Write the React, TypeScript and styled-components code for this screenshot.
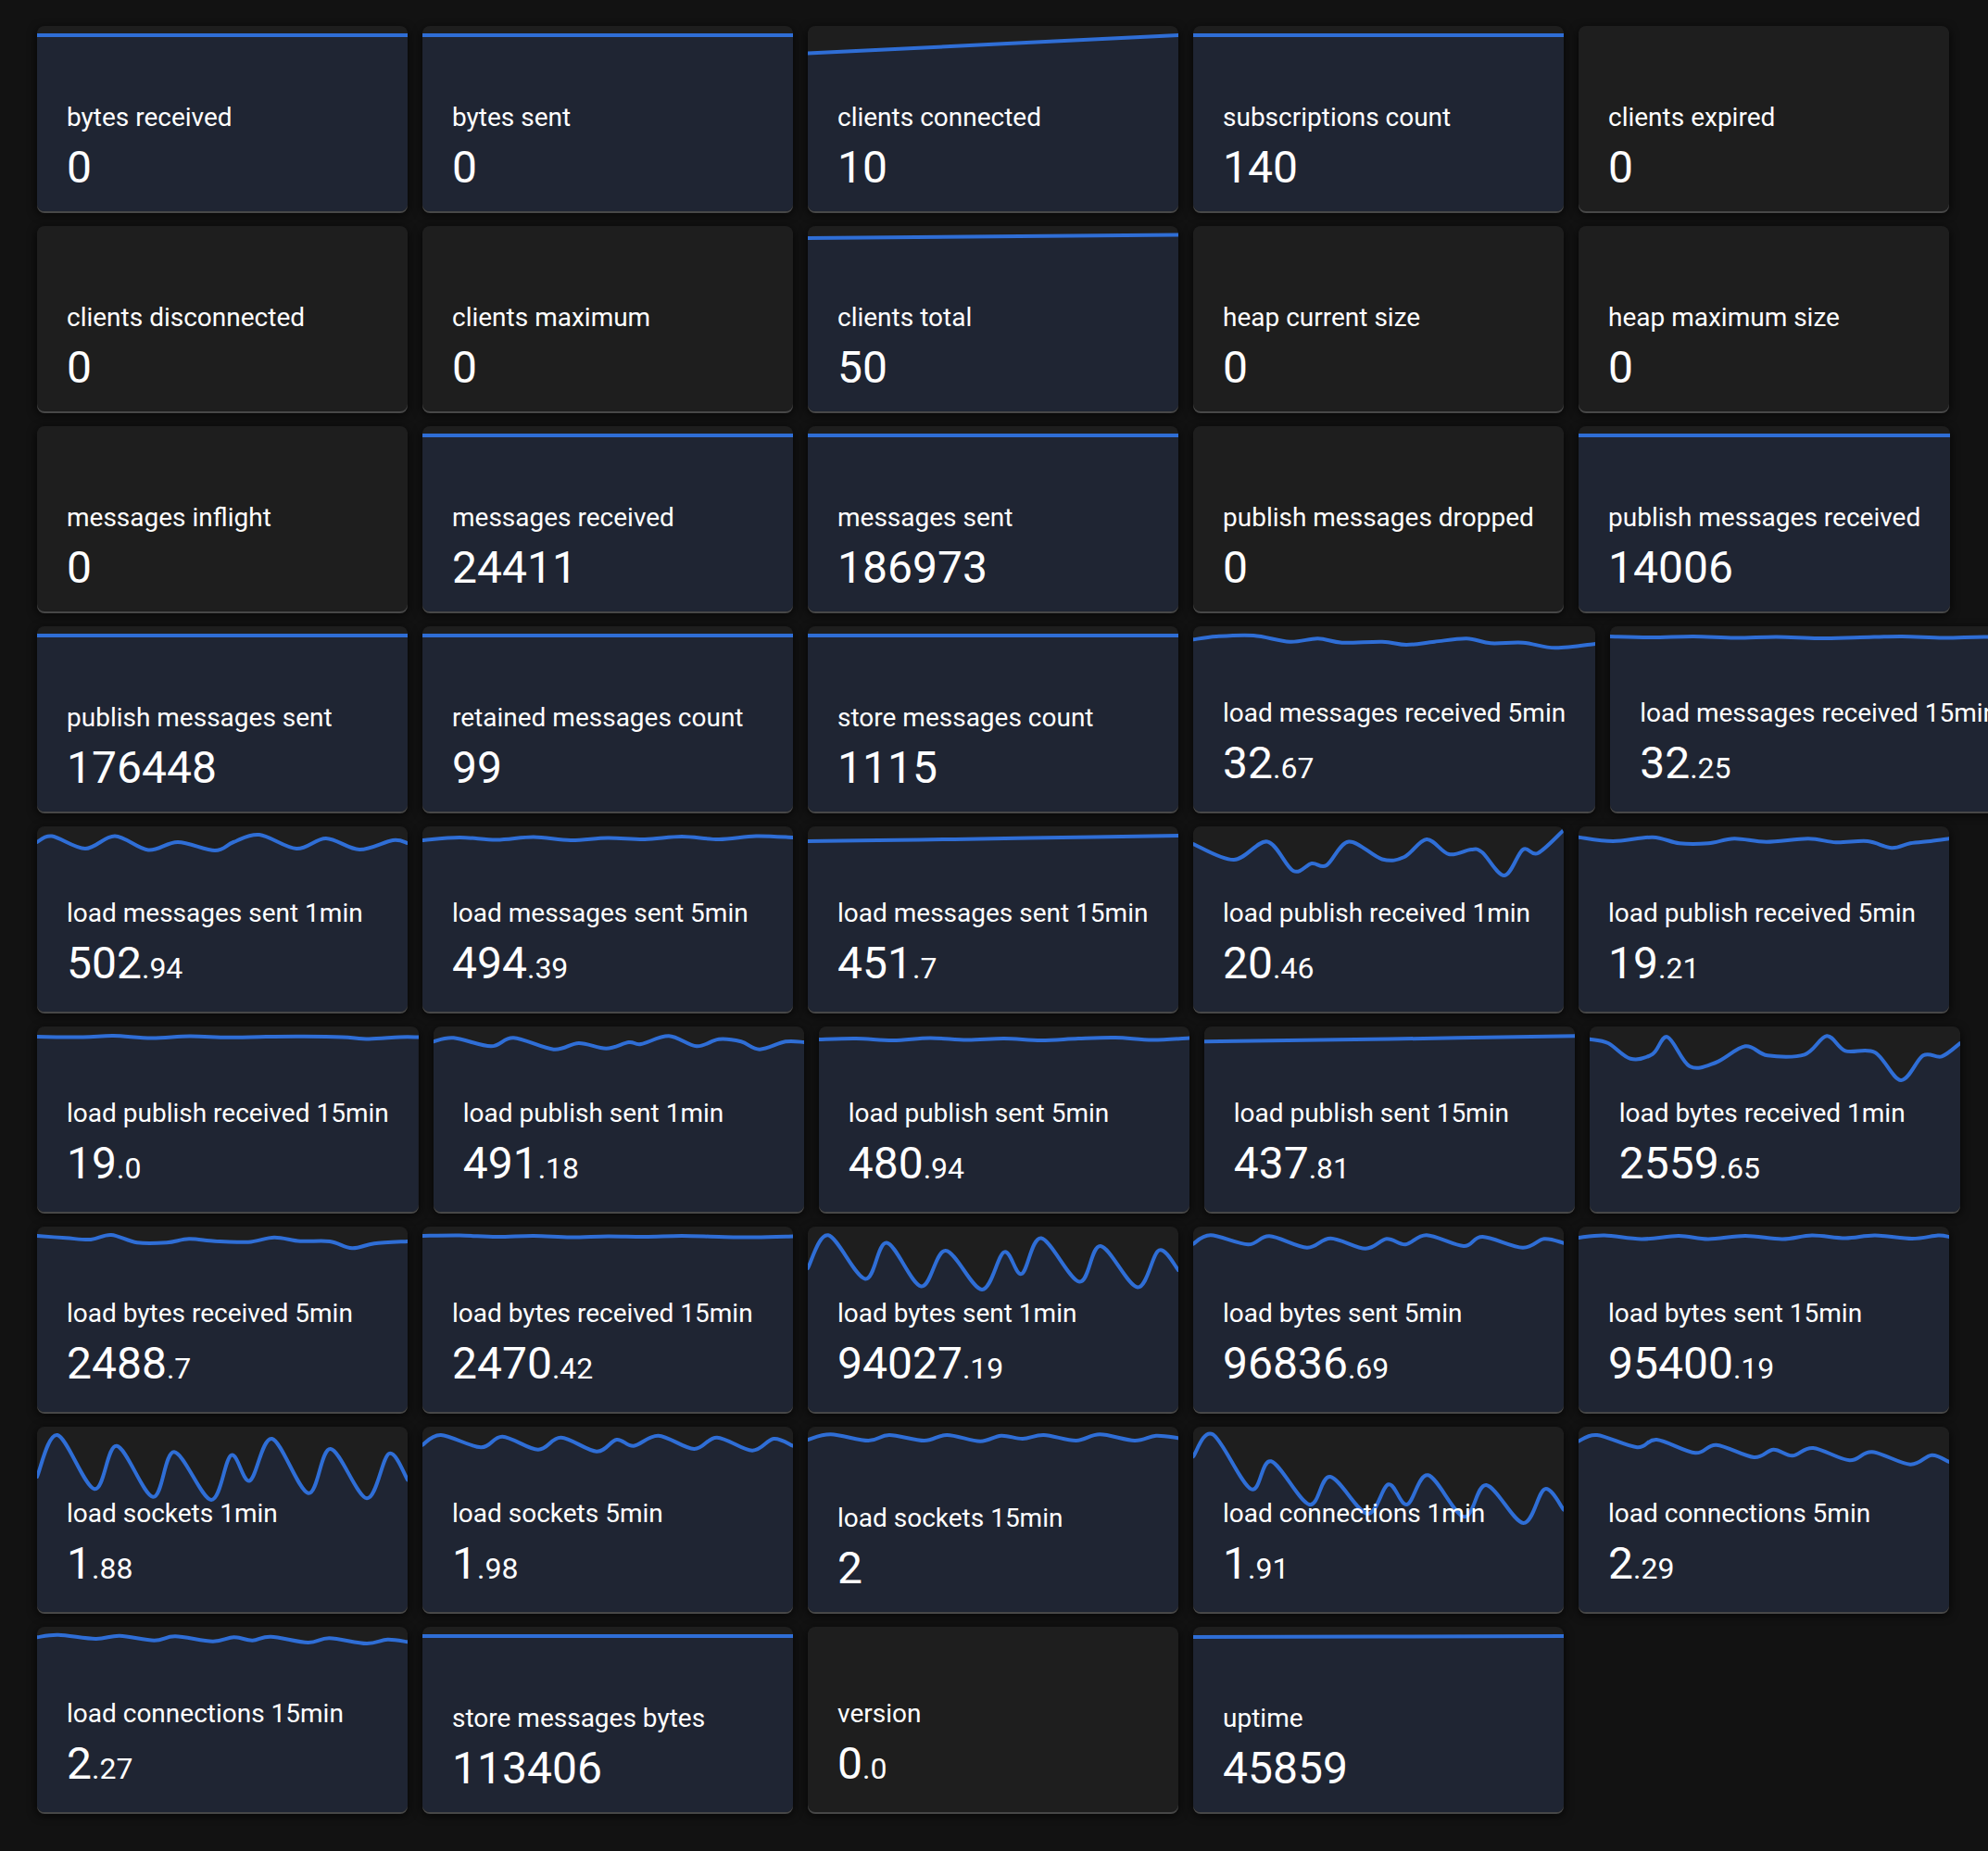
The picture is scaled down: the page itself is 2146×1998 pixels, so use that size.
import React from "react";
import styled, { createGlobalStyle } from "styled-components";

type Pt = [number, number];
type Metric = { label: string; value: string; line?: Pt[] };

const GlobalStyle = createGlobalStyle`
  html, body {
    margin: 0;
    padding: 0;
    background: #121212;
    overflow: hidden;
  }
  body {
    font-family: Roboto, "Noto Sans", "Liberation Sans", sans-serif;
    color: #ffffff;
  }
`;

const Page = styled.main`
  padding: 28px 0 0 40px;
  min-height: 1998px;
  box-sizing: border-box;
  background: #121212;
`;

const Board = styled.section`
  display: flex;
  flex-wrap: wrap;
  align-content: flex-start;
  gap: 16px;
  width: 2300px;
`;

const Card = styled.article`
  position: relative;
  flex: 0 0 auto;
  min-width: 400px;
  height: 200px;
  box-sizing: border-box;
  padding: 0 32px 23px;
  display: flex;
  flex-direction: column;
  justify-content: flex-end;
  background: #1e1e1e;
  border-radius: 8px;
  overflow: hidden;
  box-shadow: 0 2px 0 0 #474747, 0 3px 9px 2px rgba(0, 0, 0, 0.55);
`;

const Spark = styled.svg`
  position: absolute;
  inset: 0;
  width: 100%;
  height: 100%;
  display: block;
`;

const Label = styled.div`
  position: relative;
  font-size: 28px;
  line-height: 32px;
  font-weight: 400;
  margin-bottom: 14px;
  white-space: nowrap;
  color: #ffffff;
`;

const Value = styled.div`
  position: relative;
  font-size: 48px;
  line-height: 48px;
  font-weight: 400;
  white-space: nowrap;
  color: #ffffff;
`;

const Fraction = styled.span`
  font-size: 32px;
`;

const F: Pt[] = [
  [0, 10],
  [1, 10],
];

const metrics: Metric[] = [
  { label: "bytes received", value: "0", line: F },
  { label: "bytes sent", value: "0", line: F },
  { label: "clients connected", value: "10", line: [[0, 29.5], [1, 10]] },
  { label: "subscriptions count", value: "140", line: F },
  { label: "clients expired", value: "0" },
  { label: "clients disconnected", value: "0" },
  { label: "clients maximum", value: "0" },
  { label: "clients total", value: "50", line: [[0, 13], [1, 9.5]] },
  { label: "heap current size", value: "0" },
  { label: "heap maximum size", value: "0" },
  { label: "messages inflight", value: "0" },
  { label: "messages received", value: "24411", line: F },
  { label: "messages sent", value: "186973", line: F },
  { label: "publish messages dropped", value: "0" },
  { label: "publish messages received", value: "14006", line: F },
  { label: "publish messages sent", value: "176448", line: F },
  { label: "retained messages count", value: "99", line: F },
  { label: "store messages count", value: "1115", line: F },
  {
    label: "load messages received 5min",
    value: "32.67",
    line: [
      [0, 14.3], [0.058, 11], [0.15, 10], [0.24, 16.7], [0.31, 13.3], [0.37, 17.7],
      [0.47, 16.7], [0.53, 20], [0.6, 16.7], [0.68, 13.3], [0.74, 18.3], [0.82, 17.7],
      [0.9, 23.3], [1, 19],
    ],
  },
  {
    label: "load messages received 15min",
    value: "32.25",
    line: [
      [0, 11], [0.1, 12], [0.2, 11], [0.3, 12.5], [0.4, 11.5], [0.5, 13], [0.6, 12],
      [0.7, 11], [0.8, 12.5], [0.9, 11.5], [1, 13],
    ],
  },
  {
    label: "load messages sent 1min",
    value: "502.94",
    line: [
      [0, 17], [0.04, 10.5], [0.13, 24], [0.21, 10.5], [0.3, 25.5], [0.38, 17],
      [0.48, 26], [0.53, 17], [0.6, 9], [0.7, 24], [0.78, 13], [0.87, 25], [0.96, 15],
      [1, 18],
    ],
  },
  {
    label: "load messages sent 5min",
    value: "494.39",
    line: [
      [0, 15], [0.1, 12], [0.2, 14.5], [0.3, 11.5], [0.4, 15], [0.5, 12.5], [0.6, 14],
      [0.7, 11], [0.8, 14], [0.9, 10.5], [1, 12],
    ],
  },
  {
    label: "load messages sent 15min",
    value: "451.7",
    line: [[0, 16], [0.3, 14.5], [0.6, 12.5], [1, 10]],
  },
  {
    label: "load publish received 1min",
    value: "20.46",
    line: [
      [0, 19], [0.11, 36], [0.2, 16.5], [0.27, 48], [0.32, 40], [0.36, 42],
      [0.42, 16.5], [0.51, 35.5], [0.57, 33], [0.63, 14], [0.69, 30], [0.75, 25],
      [0.78, 28], [0.84, 53], [0.89, 25], [0.93, 29], [1, 4],
    ],
  },
  {
    label: "load publish received 5min",
    value: "19.21",
    line: [
      [0, 11.7], [0.093, 16], [0.2, 11.7], [0.272, 18.3], [0.35, 18.3], [0.42, 13.3],
      [0.507, 16.7], [0.62, 13.3], [0.695, 17.3], [0.78, 16], [0.845, 23.3],
      [0.895, 18.3], [0.95, 16], [1, 13.3],
    ],
  },
  {
    label: "load publish received 15min",
    value: "19.0",
    line: [
      [0, 11], [0.12, 11.5], [0.2, 10], [0.3, 12.5], [0.4, 10.5], [0.5, 11.8],
      [0.6, 11], [0.7, 10.8], [0.8, 11.5], [0.87, 13.5], [0.95, 11.5], [1, 11.5],
    ],
  },
  {
    label: "load publish sent 1min",
    value: "491.18",
    line: [
      [0, 16.3], [0.054, 12.3], [0.155, 21.3], [0.216, 12.3], [0.324, 24.7], [0.392, 18],
      [0.466, 23.7], [0.527, 17], [0.56, 19], [0.635, 10.3], [0.71, 21.3], [0.77, 13.7],
      [0.83, 16.3], [0.88, 24.7], [0.95, 16.3], [1, 17],
    ],
  },
  {
    label: "load publish sent 5min",
    value: "480.94",
    line: [
      [0, 14], [0.1, 13], [0.2, 15], [0.3, 12.5], [0.4, 14.5], [0.5, 13], [0.6, 15],
      [0.7, 13], [0.8, 12], [0.9, 14.5], [1, 12.5],
    ],
  },
  {
    label: "load publish sent 15min",
    value: "437.81",
    line: [[0, 16.3], [0.5, 13.5], [1, 10.3]],
  },
  {
    label: "load bytes received 1min",
    value: "2559.65",
    line: [
      [0, 13.7], [0.05, 18], [0.11, 34.7], [0.17, 29.7], [0.21, 11.3], [0.27, 43],
      [0.34, 39], [0.42, 21.3], [0.48, 31.3], [0.58, 30.3], [0.64, 10.3], [0.69, 26.3],
      [0.77, 28], [0.84, 58], [0.9, 31.3], [0.95, 32.3], [1, 18],
    ],
  },
  {
    label: "load bytes received 5min",
    value: "2488.7",
    line: [
      [0, 10], [0.078, 12.3], [0.145, 14], [0.2, 9], [0.27, 17.3], [0.35, 17.3],
      [0.41, 13.3], [0.48, 15.7], [0.57, 16.7], [0.64, 11.7], [0.71, 15.7], [0.79, 16],
      [0.85, 23.3], [0.91, 18.3], [1, 16],
    ],
  },
  {
    label: "load bytes received 15min",
    value: "2470.42",
    line: [
      [0, 10], [0.1, 9.5], [0.2, 11], [0.3, 10], [0.4, 11.5], [0.5, 10.5], [0.6, 11],
      [0.7, 10], [0.8, 11], [0.9, 11.5], [1, 10.5],
    ],
  },
  {
    label: "load bytes sent 1min",
    value: "94027.19",
    line: [
      [0, 45], [0.055, 9.3], [0.155, 56.5], [0.213, 17.5], [0.306, 64.5], [0.372, 26],
      [0.47, 68], [0.53, 27.5], [0.577, 51], [0.63, 12.5], [0.733, 59.5], [0.79, 21],
      [0.89, 65.5], [0.948, 25.5], [1, 47],
    ],
  },
  {
    label: "load bytes sent 5min",
    value: "96836.69",
    line: [
      [0, 18.7], [0.047, 9.3], [0.148, 19.3], [0.206, 10.3], [0.307, 22.7], [0.371, 12.7],
      [0.465, 23.7], [0.522, 13.3], [0.573, 19.3], [0.63, 9.3], [0.73, 21], [0.781, 11],
      [0.889, 22.7], [0.947, 13.3], [1, 17.7],
    ],
  },
  {
    label: "load bytes sent 15min",
    value: "95400.19",
    line: [
      [0, 12], [0.07, 9.5], [0.17, 13.5], [0.27, 10], [0.35, 13.5], [0.45, 10],
      [0.55, 13.5], [0.63, 9.5], [0.72, 12.5], [0.8, 9.5], [0.9, 13], [0.97, 9.5],
      [1, 11],
    ],
  },
  {
    label: "load sockets 1min",
    value: "1.88",
    line: [
      [0, 54], [0.055, 9], [0.155, 67.3], [0.215, 20.7], [0.313, 75.7], [0.37, 27.3],
      [0.47, 79], [0.524, 30.7], [0.574, 58.3], [0.634, 13], [0.732, 71.7], [0.792, 24],
      [0.89, 77.3], [0.95, 29], [1, 57.3],
    ],
  },
  {
    label: "load sockets 5min",
    value: "1.98",
    line: [
      [0, 19.7], [0.05, 9], [0.158, 22.3], [0.216, 10.7], [0.312, 24.7], [0.374, 11.7],
      [0.47, 26.7], [0.524, 14], [0.57, 20.7], [0.637, 9.7], [0.733, 24], [0.795, 11.7],
      [0.89, 25.7], [0.948, 13], [1, 20.7],
    ],
  },
  {
    label: "load sockets 15min",
    value: "2",
    line: [
      [0, 14], [0.062, 8.3], [0.163, 15], [0.22, 9], [0.314, 15], [0.376, 9],
      [0.465, 15.7], [0.522, 9.7], [0.58, 13], [0.637, 9], [0.724, 15], [0.788, 8.3],
      [0.882, 15], [0.94, 9.7], [1, 12.3],
    ],
  },
  {
    label: "load connections 1min",
    value: "1.91",
    line: [
      [0, 32.3], [0.053, 8.3], [0.156, 67.3], [0.21, 37.3], [0.313, 84], [0.37, 54],
      [0.47, 94], [0.527, 62.3], [0.577, 84], [0.634, 52.3], [0.731, 97.3], [0.791, 63],
      [0.891, 104], [0.949, 67.3], [1, 89.7],
    ],
  },
  {
    label: "load connections 5min",
    value: "2.29",
    line: [
      [0, 15.7], [0.05, 9], [0.158, 22.3], [0.211, 14], [0.315, 28.3], [0.372, 19.7],
      [0.473, 33], [0.526, 24.7], [0.577, 31.3], [0.633, 23], [0.731, 36.3], [0.792, 27.3],
      [0.895, 40.7], [0.953, 30.7], [1, 38],
    ],
  },
  {
    label: "load connections 15min",
    value: "2.27",
    line: [
      [0, 11.3], [0.057, 8.7], [0.158, 13], [0.223, 9.7], [0.316, 14.7], [0.373, 10.3],
      [0.474, 15.7], [0.531, 11.3], [0.581, 14.7], [0.631, 10.7], [0.731, 17], [0.789, 12.3],
      [0.889, 18], [0.946, 13.7], [1, 16.3],
    ],
  },
  { label: "store messages bytes", value: "113406", line: F },
  { label: "version", value: "0.0" },
  { label: "uptime", value: "45859", line: [[0, 11], [1, 10]] },
];

const W = 1000;
const H = 200;

function linePath(pts: Pt[]): string {
  const P = pts.map(([f, y]) => [f * W, y]);
  let d = `M${P[0][0].toFixed(2)},${P[0][1].toFixed(2)}`;
  for (let i = 0; i < P.length - 1; i++) {
    const p0 = P[i - 1] || P[i];
    const p1 = P[i];
    const p2 = P[i + 1];
    const p3 = P[i + 2] || P[i + 1];
    const c1x = p1[0] + (p2[0] - p0[0]) / 6;
    const c1y = p1[1] + (p2[1] - p0[1]) / 6;
    const c2x = p2[0] - (p3[0] - p1[0]) / 6;
    const c2y = p2[1] - (p3[1] - p1[1]) / 6;
    d += ` C${c1x.toFixed(2)},${c1y.toFixed(2)} ${c2x.toFixed(2)},${c2y.toFixed(2)} ${p2[0].toFixed(2)},${p2[1].toFixed(2)}`;
  }
  return d;
}

const Sparkline: React.FC<{ points: Pt[] }> = ({ points }) => {
  const d = linePath(points);
  return (
    <Spark viewBox={`0 0 ${W} ${H}`} preserveAspectRatio="none" aria-hidden="true">
      <path d={`${d} L${W},${H} L0,${H} Z`} fill="#1f2533" stroke="none" />
      <path
        d={d}
        fill="none"
        stroke="#2f6ed6"
        strokeWidth={4}
        strokeLinejoin="round"
        strokeLinecap="round"
        vectorEffect="non-scaling-stroke"
      />
    </Spark>
  );
};

const MetricCard: React.FC<{ metric: Metric }> = ({ metric }) => {
  const [whole, frac] = metric.value.split(".");
  return (
    <Card>
      {metric.line && <Sparkline points={metric.line} />}
      <Label>{metric.label}</Label>
      <Value>
        {whole}
        {frac !== undefined && <Fraction>.{frac}</Fraction>}
      </Value>
    </Card>
  );
};

export default function App() {
  return (
    <>
      <GlobalStyle />
      <Page>
        <Board>
          {metrics.map((m) => (
            <MetricCard key={m.label} metric={m} />
          ))}
        </Board>
      </Page>
    </>
  );
}
